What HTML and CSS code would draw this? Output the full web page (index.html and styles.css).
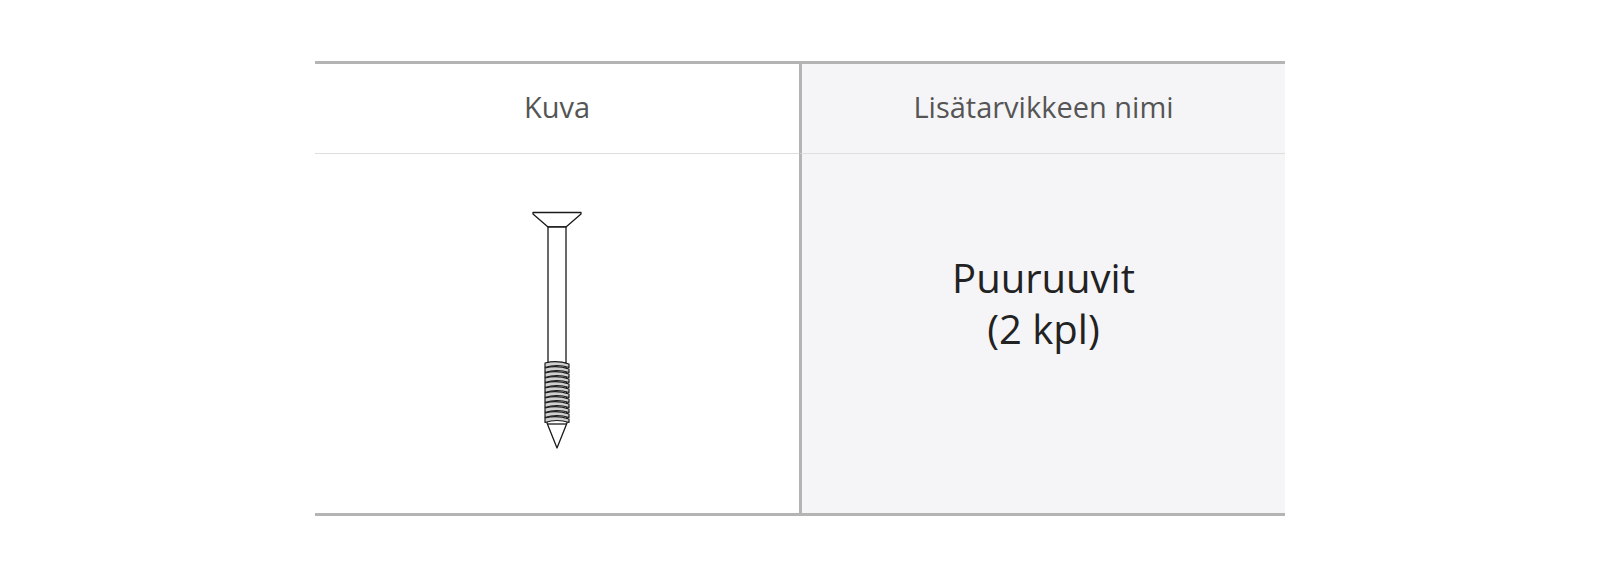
FILE: index.html
```html
<!DOCTYPE html>
<html lang="fi">
<head>
<meta charset="utf-8">
<title>Lisätarvikkeet</title>
<link rel="stylesheet" href="styles.css">
</head>
<body>
<div class="page">
  <div class="table">
    <div class="cell head">Kuva</div>
    <div class="cell head alt">Lisätarvikkeen nimi</div>
    <div class="cell body">
      <svg class="screw" width="52" height="242" viewBox="0 0 52 242" fill="none" stroke="#1a1a1a" stroke-width="1.3" stroke-linejoin="round">
        <path d="M2 2.5 H50 V4 L35 17 H17 L2 4 Z" fill="#fff"/>
        <rect x="17" y="17" width="18" height="136" fill="#fff"/>
        <path d="M17 153 L16 213 L26 238 L36 213 L35 153" fill="#fff"/>
        <path d="M17 214 H35" />
        <g stroke-width="1.2">
          <path d="M14 153 Q26 150 38 154 L38 157.5 Q26 153.5 14 157.5 Z" fill="#cfcfcf"/>
          <path d="M14 158 Q26 155 38 159 L38 162.5 Q26 158.5 14 162.5 Z" fill="#cfcfcf"/>
          <path d="M14 163 Q26 160 38 164 L38 167.5 Q26 163.5 14 167.5 Z" fill="#cfcfcf"/>
          <path d="M14 168 Q26 165 38 169 L38 172.5 Q26 168.5 14 172.5 Z" fill="#cfcfcf"/>
          <path d="M14 173 Q26 170 38 174 L38 177.5 Q26 173.5 14 177.5 Z" fill="#cfcfcf"/>
          <path d="M14 178 Q26 175 38 179 L38 182.5 Q26 178.5 14 182.5 Z" fill="#cfcfcf"/>
          <path d="M14 183 Q26 180 38 184 L38 187.5 Q26 183.5 14 187.5 Z" fill="#cfcfcf"/>
          <path d="M14 188 Q26 185 38 189 L38 192.5 Q26 188.5 14 192.5 Z" fill="#cfcfcf"/>
          <path d="M14 193 Q26 190 38 194 L38 197.5 Q26 193.5 14 197.5 Z" fill="#cfcfcf"/>
          <path d="M14 198 Q26 195 38 199 L38 202.5 Q26 198.5 14 202.5 Z" fill="#cfcfcf"/>
          <path d="M14 203 Q26 200 38 204 L38 207.5 Q26 203.5 14 207.5 Z" fill="#cfcfcf"/>
          <path d="M14 208 Q26 205 38 209 L38 212.5 Q26 208.5 14 212.5 Z" fill="#cfcfcf"/>
        </g>
      </svg>
    </div>
    <div class="cell body alt">
      <div class="name">Puuruuvit<br>(2 kpl)</div>
    </div>
  </div>
</div>
</body>
</html>
```

FILE: styles.css
```css
html, body {
  margin: 0;
  padding: 0;
  background: #ffffff;
}
.page {
  padding-top: 61px;
  display: flex;
  justify-content: center;
}
.table {
  width: 970px;
  display: grid;
  grid-template-columns: 484px 486px;
  grid-template-rows: 90px 359px;
  border-top: 3px solid #b4b4b4;
  border-bottom: 3px solid #b4b4b4;
  font-family: "Open Sans", "Liberation Sans", sans-serif;
}
.cell {
  display: flex;
  align-items: center;
  justify-content: center;
  background: #ffffff;
}
.cell.alt {
  background: #f5f5f7;
  border-left: 3px solid #b4b4b4;
}
.head {
  border-bottom: 1px solid #dedede;
  font-size: 29px;
  color: #555555;
  padding-bottom: 4px;
}
.body .screw {
  display: block;
  margin-top: -6px;
}
.body.alt {
  padding-bottom: 62px;
}
.name {
  text-align: center;
  font-size: 40px;
  line-height: 51px;
  color: #222222;
}
```
